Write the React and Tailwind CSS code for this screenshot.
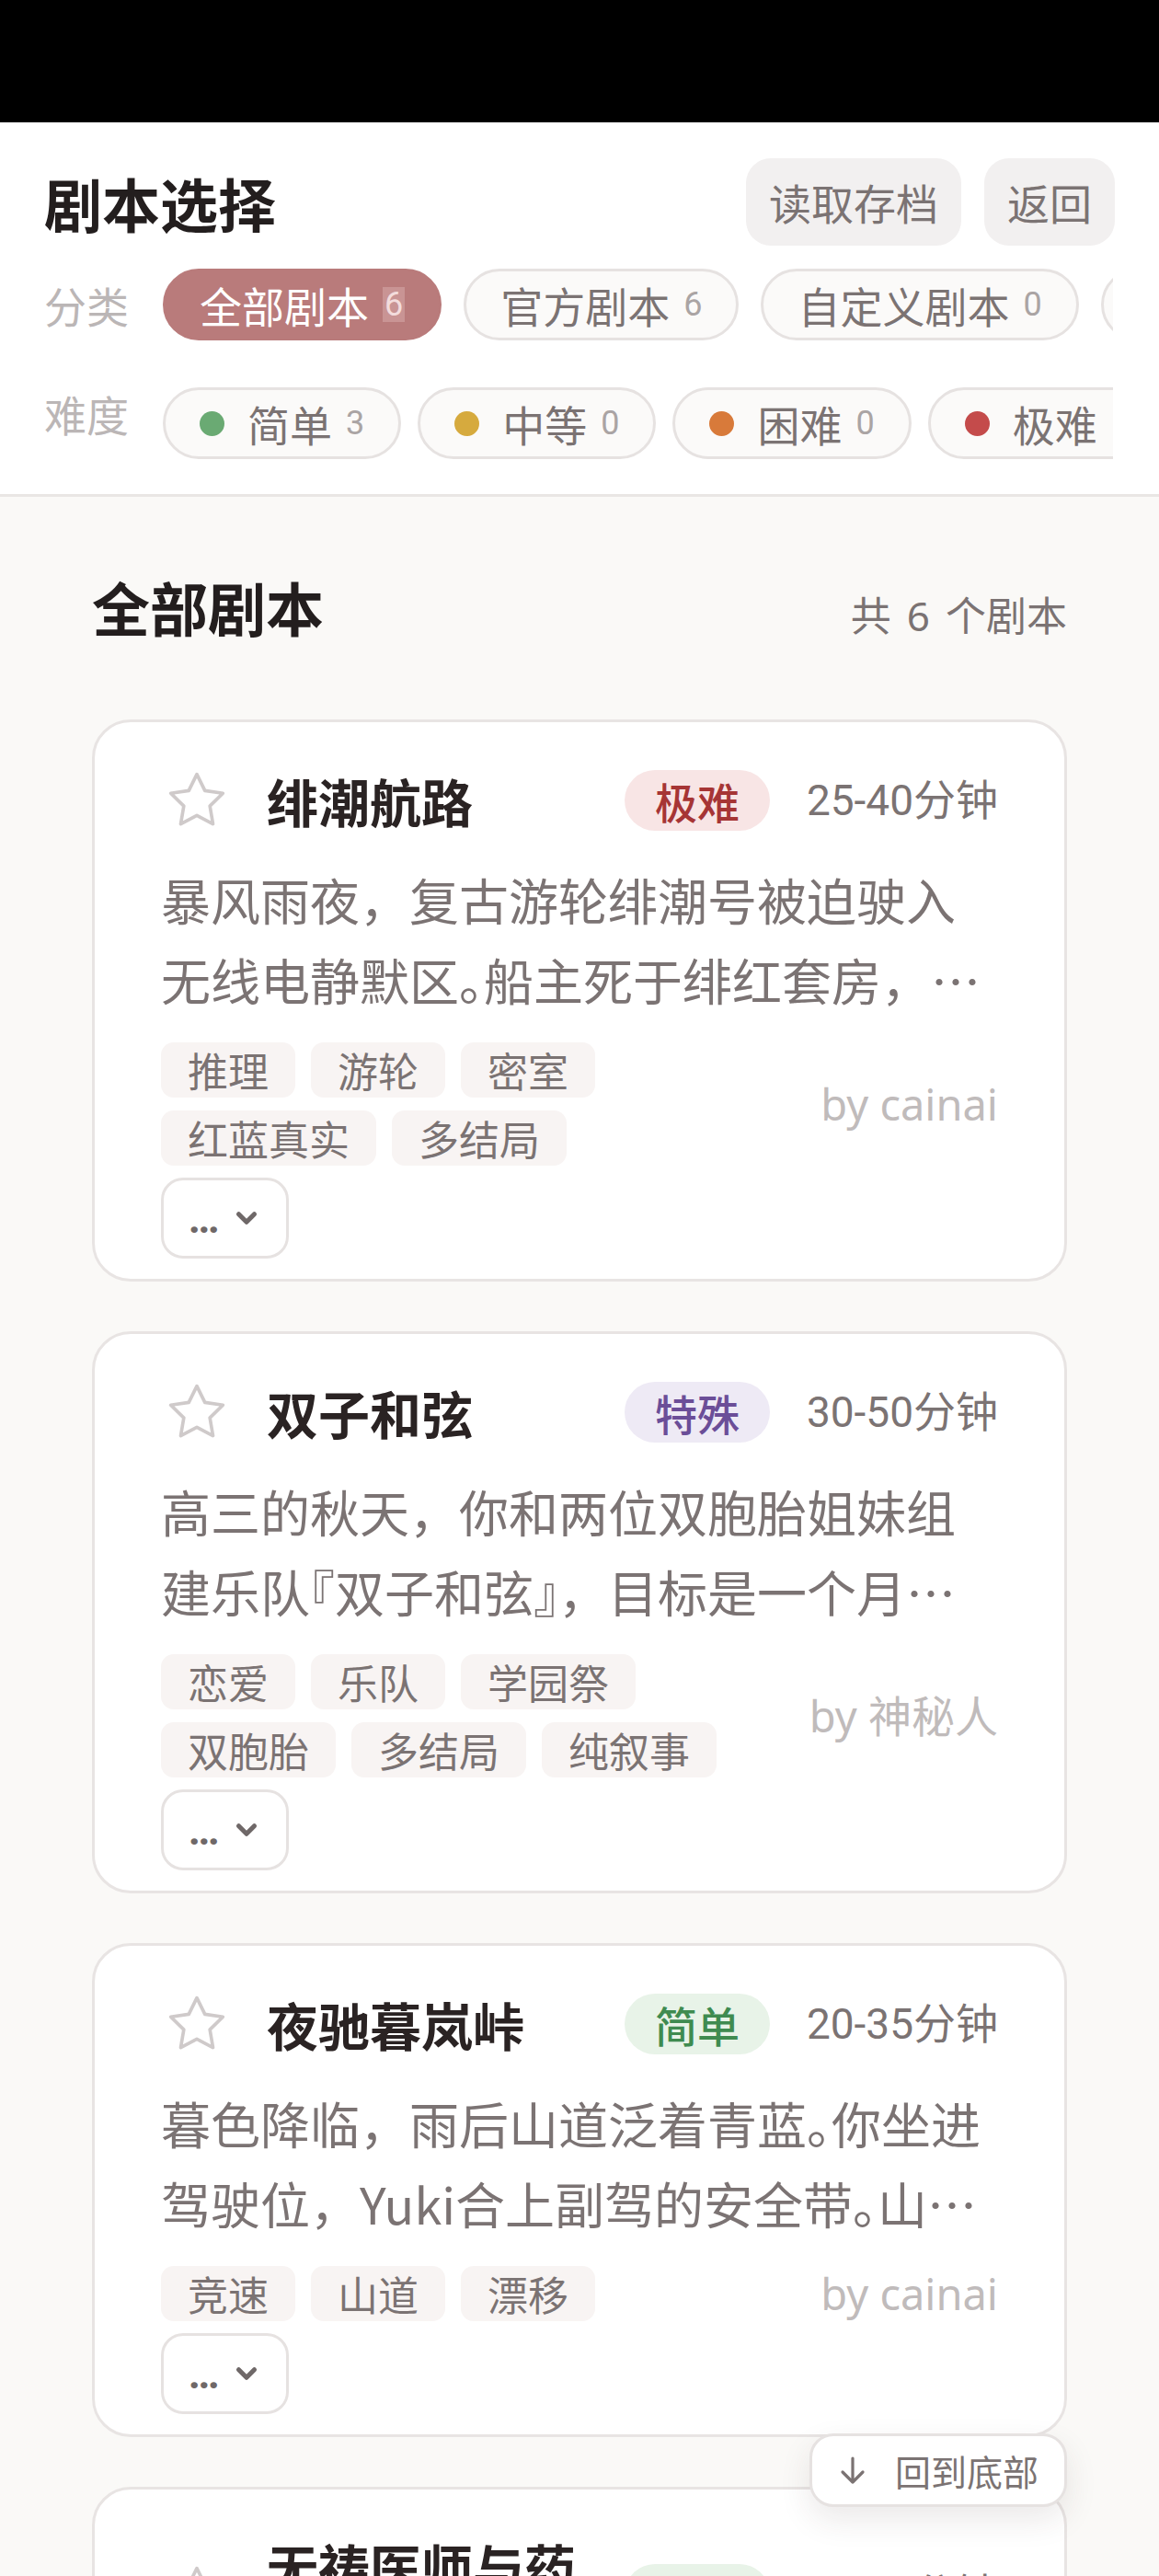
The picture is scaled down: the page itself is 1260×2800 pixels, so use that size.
import React from 'react';

const cats = [
  { name: '全部剧本', count: 6, active: true },
  { name: '官方剧本', count: 6 },
  { name: '自定义剧本', count: 0 },
  { name: '我的收藏', count: 0 },
];

const levels = [
  { name: '简单', count: 3, dot: 'bg-[#6aaa73]' },
  { name: '中等', count: 0, dot: 'bg-[#d6aa3e]' },
  { name: '困难', count: 0, dot: 'bg-[#d87a3a]' },
  { name: '极难', count: 1, dot: 'bg-[#c44b4b]' },
  { name: '特殊', count: 1, dot: 'bg-[#7a5aa8]' },
];

const badgeStyle = {
  极难: 'bg-[#f8e5e5] text-[#a63535]',
  特殊: 'bg-[#eeeaf5] text-[#6b4e98]',
  简单: 'bg-[#e8f3e8] text-[#3f8b50]',
};

const scripts = [
  {
    title: '绯潮航路',
    level: '极难',
    time: '25-40分钟',
    desc: '暴风雨夜，复古游轮绯潮号被迫驶入无线电静默区。船主死于绯红套房，每一位乘客都藏着不可告人的秘密。',
    tags: ['推理', '游轮', '密室', '红蓝真实', '多结局'],
    author: 'cainai',
  },
  {
    title: '双子和弦',
    level: '特殊',
    time: '30-50分钟',
    desc: '高三的秋天，你和两位双胞胎姐妹组建乐队『双子和弦』，目标是一个月后的学园祭演出。',
    tags: ['恋爱', '乐队', '学园祭', '双胞胎', '多结局', '纯叙事'],
    author: '神秘人',
  },
  {
    title: '夜驰暮岚峠',
    level: '简单',
    time: '20-35分钟',
    desc: '暮色降临，雨后山道泛着青蓝。你坐进驾驶位，Yuki合上副驾的安全带。山顶的终点线在等着你们。',
    tags: ['竞速', '山道', '漂移'],
    author: 'cainai',
  },
  {
    title: '无祷医师与药剂之谜',
    level: '简单',
    time: '20-30分钟',
    desc: '小镇的诊所里，一位从不祈祷的医师守着满柜的药剂。某天清晨，药柜上多了一瓶没有标签的药水。',
    tags: ['推理', '日常'],
    author: 'cainai',
  },
];

// half-width for some CJK punctuation, like the reference renders it
function Punct({ text }) {
  return text.split(/([。『』])/).map((part, i) =>
    /^[。『』]$/.test(part) ? (
      <span key={i} className="[font-feature-settings:'halt']">
        {part}
      </span>
    ) : (
      part
    )
  );
}

const StarIcon = () => (
  <svg viewBox="0 0 24 24" className="ml-[5px] h-[68px] w-[68px] shrink-0 -my-[1px]" fill="none">
    <polygon
      points="12 2 15.09 8.26 22 9.27 17 14.14 18.18 21.02 12 17.77 5.82 21.02 7 14.14 2 9.27 8.91 8.26"
      stroke="#cfcaca"
      strokeWidth="1.3"
      strokeLinejoin="round"
    />
  </svg>
);

const ScriptCard = ({ s }) => (
  <div className="rounded-[42px] border-[3px] border-[#e8e4e3] bg-white px-[72px] pt-[52px] pb-[22px]">
    <div className="flex items-center">
      <StarIcon />
      <h3 className="ml-[42px] min-w-0 flex-1 text-[56px] font-bold leading-[62px] text-[#2a2323]">{s.title}</h3>
      <span
        className={`ml-[24px] flex h-[66px] shrink-0 items-center rounded-full px-[33px] text-[46px] font-medium leading-none ${badgeStyle[s.level]}`}
      >
        {s.level}
      </span>
      <span className="ml-[40px] shrink-0 font-[Roboto,'Noto_Sans_CJK_SC',sans-serif] text-[46px] leading-none text-[#7b7373]">
        {s.time}
      </span>
    </div>

    <p className="mt-[31px] line-clamp-2 text-[54px] leading-[87px] text-[#7b7373] [text-spacing-trim:space-all]">
      <Punct text={s.desc} />
    </p>

    <div className="mt-[25px] flex items-center">
      <div className="flex min-w-0 flex-1 flex-wrap gap-x-[17px] gap-y-[14px]">
        {s.tags.map((t) => (
          <span key={t} className="flex h-[60px] items-center rounded-[14px] bg-[#f8f4f3] px-[29px] text-[44px] leading-none text-[#7b7373]">
            {t}
          </span>
        ))}
      </div>
      <span className="ml-[30px] shrink-0 font-['Noto_Sans','Noto_Sans_CJK_SC',sans-serif] text-[47px] leading-none text-[#c0bbbb]">
        by {s.author}
      </span>
    </div>

    <button className="mt-[13px] flex h-[88px] w-[139px] items-center justify-center gap-[12px] rounded-[24px] border-[3px] border-[#e6e2e1] bg-white text-[#6f6868]">
      <span className="font-[Roboto,sans-serif] text-[46px] font-bold leading-none">…</span>
      <svg viewBox="0 0 24 24" className="h-[34px] w-[34px]" fill="none">
        <path d="M6 9l6 6 6-6" stroke="#6f6868" strokeWidth="3.6" strokeLinecap="round" strokeLinejoin="round" />
      </svg>
    </button>
  </div>
);

export default function App() {
  return (
    <div className="relative h-[2800px] w-[1260px] overflow-hidden bg-[#faf9f7] font-['Noto_Sans_CJK_SC','Noto_Sans',sans-serif]">
      <div className="h-[133px] bg-black" />

      <header className="border-b-[3px] border-[#e9e6e4] bg-white px-[48px] pt-[39px] pb-[38px]">
        <div className="flex h-[95px] items-center justify-between">
          <h1 className="text-[63px] font-bold leading-none text-[#231e1e]">剧本选择</h1>
          <div className="flex gap-[25px]">
            <button className="h-[95px] rounded-[27px] bg-[#f2f0f0] px-[25px] text-[46px] text-[#7b7373]">读取存档</button>
            <button className="h-[95px] rounded-[27px] bg-[#f2f0f0] px-[25px] text-[46px] text-[#7b7373]">返回</button>
          </div>
        </div>

        <div className="mt-[25px] flex items-center">
          <span className="w-[129px] shrink-0 text-[46px] text-[#bbb6b6]">分类</span>
          <div className="mr-[2px] flex min-w-0 flex-1 gap-[24px] overflow-hidden">
            {cats.map((c) => (
              <div
                key={c.name}
                className={`flex h-[78px] shrink-0 items-center whitespace-nowrap rounded-full border-[3px] px-[37px] ${
                  c.active ? 'border-[#b97b7b] bg-[#b97b7b] text-white' : 'border-[#e6e2e1] bg-[#fbfaf9] text-[#7b7373]'
                }`}
              >
                <span className="text-[46px] leading-none">{c.name}</span>
                <span
                  className={`ml-[15px] font-[Roboto,sans-serif] text-[36px] leading-[38px] ${
                    c.active ? 'bg-[#c99494] px-[2px] text-[#f3dcdc]' : 'text-[#aaa4a4]'
                  }`}
                >
                  {c.count}
                </span>
              </div>
            ))}
          </div>
        </div>

        <div className="mt-[51px] flex items-start">
          <span className="w-[129px] shrink-0 text-[46px] leading-[56px] text-[#bbb6b6]">难度</span>
          <div className="mr-[2px] flex min-w-0 flex-1 gap-[18px] overflow-hidden">
            {levels.map((l) => (
              <div
                key={l.name}
                className="flex h-[78px] shrink-0 items-center whitespace-nowrap rounded-full border-[3px] border-[#e6e2e1] bg-[#fbfaf9] px-[37px] text-[#7b7373]"
              >
                <span className={`h-[27px] w-[27px] rounded-full ${l.dot}`} />
                <span className="ml-[25px] text-[46px] leading-none">{l.name}</span>
                <span className="ml-[15px] font-[Roboto,sans-serif] text-[36px] leading-none text-[#aaa4a4]">{l.count}</span>
              </div>
            ))}
          </div>
        </div>
      </header>

      <main className="px-[100px] pt-[87px]">
        <div className="flex items-baseline justify-between">
          <h2 className="text-[63px] font-bold leading-none text-[#231e1e]">全部剧本</h2>
          <span className="font-['Noto_Sans','Noto_Sans_CJK_SC',sans-serif] text-[44px] text-[#7b7373]">
            共<span className="mx-[17px]">6</span>个剧本
          </span>
        </div>

        <div className="mt-[80px] flex flex-col gap-[54px]">
          {scripts.map((s) => (
            <ScriptCard key={s.title} s={s} />
          ))}
        </div>
      </main>

      <button className="absolute bottom-[75px] right-[100px] z-10 flex h-[80px] items-center gap-[30px] rounded-[26px] border-[3px] border-[#e6e2e1] bg-white px-[28px] text-[#7b7373] shadow-[0_14px_34px_rgba(60,40,40,0.10)]">
        <svg viewBox="0 0 32 32" className="h-[32px] w-[32px]" fill="none">
          <path d="M16 3v26M5 18l11 11 11-11" stroke="#7b7373" strokeWidth="3.2" strokeLinecap="round" strokeLinejoin="round" />
        </svg>
        <span className="text-[39px] leading-none">回到底部</span>
      </button>
    </div>
  );
}
